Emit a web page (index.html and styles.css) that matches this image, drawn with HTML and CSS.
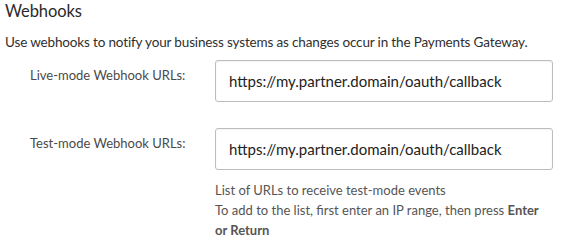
FILE: index.html
```html
<!DOCTYPE html>
<html>
<head>
<meta charset="utf-8">
<link rel="stylesheet" href="styles.css">
</head>
<body>
<section class="panel">
  <h2 class="title">Webhooks</h2>
  <p class="intro">Use webhooks to notify your business systems as changes occur in the Payments Gateway.</p>
  <div class="row">
    <label class="label">Live-mode Webhook URLs:</label>
    <div class="field">
      <div class="input">https://my.partner.domain/oauth/callback</div>
    </div>
  </div>
  <div class="row">
    <label class="label">Test-mode Webhook URLs:</label>
    <div class="field">
      <div class="input">https://my.partner.domain/oauth/callback</div>
      <p class="help">List of URLs to receive test-mode events<br>To add to the list, first enter an IP range, then press <b>Enter or Return</b></p>
    </div>
  </div>
</section>
</body>
</html>
```
FILE: styles.css
```css
html, body {
  margin: 0;
  padding: 0;
  background: #fff;
}
body {
  font-family: Lato, "Open Sans", sans-serif;
  color: #333;
}
.panel {
  padding: 0 5px 0 5px;
}
.title {
  margin: 0;
  font-size: 16.5px;
  letter-spacing: -0.1px;
  font-weight: 400;
  line-height: 22px;
  color: #2a2a2a;
}
.intro {
  margin: 11px 0 0 0;
  font-size: 13.5px;
  letter-spacing: -0.15px;
  line-height: 18px;
  color: #2f2f2f;
  white-space: nowrap;
}
.row {
  display: flex;
  margin-top: 9px;
}
.row + .row {
  margin-top: 26px;
}
.label {
  width: 210px;
  padding-left: 25px;
  box-sizing: border-box;
  font-size: 13px;
  color: #4a4a4a;
  line-height: 18px;
  padding-top: 6px;
  white-space: nowrap;
}
.field {
  display: flex;
  flex-direction: column;
  width: 338px;
}
.input {
  height: 42px;
  box-sizing: border-box;
  border: 1px solid #bdbdbd;
  border-radius: 3px;
  box-shadow: inset 0 1px 2px rgba(0,0,0,0.06);
  padding: 0 13px;
  display: flex;
  align-items: center;
  font-size: 15px;
  color: #222;
}
.help {
  margin: 10px 0 0 0;
  font-size: 13px;
  line-height: 20px;
  color: #555;
}
.help b {
  font-weight: 700;
  color: #555;
}
```
